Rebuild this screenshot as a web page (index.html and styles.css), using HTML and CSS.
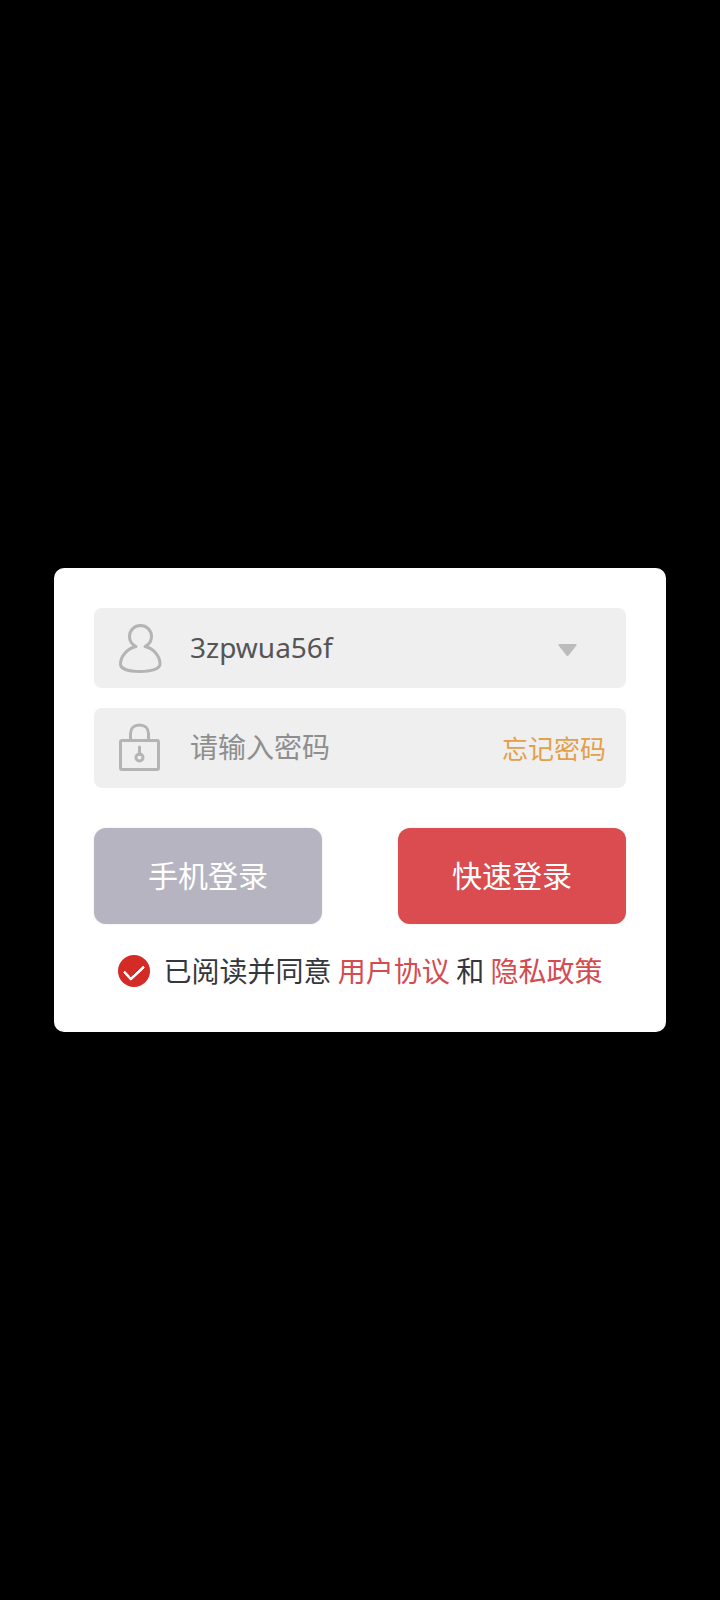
FILE: index.html
```html
<!DOCTYPE html>
<html lang="zh-CN">
<head>
<meta charset="utf-8">
<meta name="viewport" content="width=device-width, initial-scale=1">
<title>登录</title>
<link rel="stylesheet" href="styles.css">
</head>
<body>
<main class="screen">
  <form class="card">
    <div class="field">
      <svg class="field-icon" viewBox="0 0 48 56" aria-hidden="true">
        <path d="M20 26.500C16 24.500 13.500 20.500 13.500 16.500C13.500 10 18.500 5.500 24.500 5.500S35.500 10 35.500 16.500C35.500 20.500 33 24.500 29 26.500C38 28.500 44 36.500 44 44C44 49 35 51.500 24 51.500S4.500 49 4.500 44C4.500 36.500 11 28.500 20 26.500Z"/>
      </svg>
      <input class="field-input" type="text" value="3zpwua56f" aria-label="账号">
      <button class="toggle" type="button" aria-label="选择账号">
        <svg class="toggle-icon" viewBox="0 0 20 14" aria-hidden="true"><path d="M1.500 1H17.500Q19.500 1 18 3L10.500 12.500Q9.500 13.500 8.500 12.500L1 3Q-0.500 1 1.500 1Z"/></svg>
      </button>
    </div>
    <div class="field">
      <svg class="field-icon" viewBox="0 0 48 56" aria-hidden="true">
        <path d="M14.500 20V13.500C14.500 8.500 18 5 23.500 5S32.500 8.500 32.500 13.500V20"/>
        <rect x="4.500" y="20.500" width="38" height="29" rx="1.500"/>
        <path d="M23.500 27V34.500"/>
        <circle cx="23.500" cy="37.500" r="3.500"/>
      </svg>
      <input class="field-input" type="password" placeholder="请输入密码" aria-label="密码">
      <a class="forgot" href="#">忘记密码</a>
    </div>
    <div class="actions">
      <button class="button button-phone" type="button">手机登录</button>
      <button class="button button-quick" type="submit">快速登录</button>
    </div>
    <div class="agreement">
      <input class="agree-box" id="agree" type="checkbox" checked>
      <p class="agree-text"><label for="agree">已阅读并同意</label> <a class="agree-link" href="#">用户协议</a> 和 <a class="agree-link" href="#">隐私政策</a></p>
    </div>
  </form>
</main>
</body>
</html>
```
FILE: styles.css
```css
* {
  box-sizing: border-box;
}

body {
  margin: 0;
  background: #000;
  font-family: "Noto Sans CJK SC", sans-serif;
  font-size: 28px;
}

a {
  text-decoration: none;
}

.screen {
  min-height: 100vh;
  display: flex;
  align-items: center;
  padding: 0 54px;
}

.card {
  flex: 1;
  min-width: 0;
  padding: 40px;
  border-radius: 10px;
  background: #fff;
}

.field {
  display: flex;
  align-items: center;
  height: 80px;
  margin-bottom: 20px;
  padding: 0 20px 0 22px;
  border-radius: 8px;
  background: #efefef;
}

.field-icon {
  flex: none;
  width: 48px;
  height: 56px;
  margin-right: 26px;
  fill: none;
  stroke: #b4b4b4;
  stroke-width: 3;
  stroke-linecap: round;
  stroke-linejoin: round;
}

.field-input {
  flex: 1;
  min-width: 0;
  height: 80px;
  padding: 0 0 2px;
  border: 0;
  outline: 0;
  background: none;
  color: #555;
  font-family: "Noto Sans", "Noto Sans CJK SC", sans-serif;
  font-size: 28px;
}

.field-input::placeholder {
  color: #8e8e8e;
  opacity: 1;
}

.toggle {
  display: flex;
  align-items: center;
  justify-content: center;
  width: 76px;
  height: 80px;
  padding: 4px 0 0;
  border: 0;
  background: none;
}

.toggle-icon {
  width: 20px;
  height: 14px;
  fill: #bcbcbc;
}

.forgot {
  padding-bottom: 2px;
  color: #e3a04a;
  font-size: 26px;
}

.actions {
  display: grid;
  grid-template-columns: 1fr 1fr;
  gap: 76px;
  margin-top: 40px;
}

.button {
  height: 96px;
  padding: 0 0 4px;
  border: 0;
  border-radius: 12px;
  color: #fff;
  font: inherit;
  font-size: 30px;
  box-shadow: 0 0 2px rgba(0, 0, 0, 0.12);
}

.button-phone {
  background: #b6b4c0;
}

.button-quick {
  background: #da4c4f;
}

.agreement {
  display: flex;
  align-items: center;
  justify-content: center;
  gap: 14px;
  margin-top: 26px;
  color: #36373d;
}

.agree-box {
  appearance: none;
  display: grid;
  place-items: center;
  flex: none;
  width: 32px;
  height: 32px;
  margin: 0;
  border-radius: 50%;
  background: #d42b27;
}

.agree-box:checked::before {
  content: "";
  width: 17px;
  height: 9px;
  margin-bottom: 3px;
  border: solid #fff;
  border-width: 0 0 3px 3px;
  border-radius: 2px;
  transform: rotate(-43deg);
}

.agree-text {
  margin: 0;
  padding-bottom: 2px;
  line-height: 40px;
}

.agree-link {
  color: #d34c50;
}
```
